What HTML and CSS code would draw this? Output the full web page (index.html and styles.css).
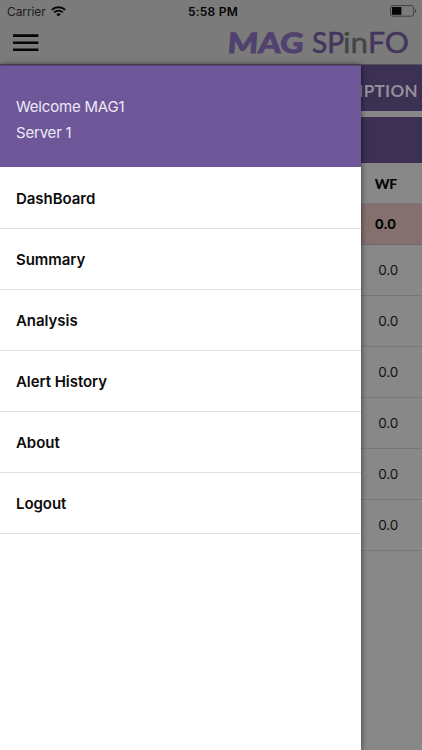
FILE: index.html
```html
<!DOCTYPE html>
<html lang="en">
<head>
<meta charset="utf-8">
<meta name="viewport" content="width=device-width, initial-scale=1">
<title>MAG SPinFO</title>
<link rel="stylesheet" href="styles.css">
</head>
<body>
<div class="app">
  <header class="header">
    <div class="status">
      <div class="carrier"><span>Carrier</span>
        <svg class="wifi" width="15" height="11" viewBox="0 0 15 11" fill="none" stroke="#050505"><path d="M.8 3.9a9.5 9.5 0 0 1 13.4 0" stroke-width="2"/><path d="M3.2 6.4a6.1 6.1 0 0 1 8.6 0" stroke-width="1.8"/><path d="M7.5 10.6 5.2 8.3a3.3 3.3 0 0 1 4.6 0z" fill="#050505" stroke="none"/></svg>
      </div>
      <span class="clock">5:58 PM</span>
      <svg class="battery" width="27" height="12" viewBox="0 0 27 12"><rect x=".6" y=".6" width="23" height="10.6" rx="2.2" fill="none" stroke="#3f3f3f"/><rect x="2" y="2" width="9.4" height="7.8" rx=".6" fill="#050505"/><path d="M25 4v4q1.3-.6 1.3-2T25 4z" fill="#3f3f3f"/></svg>
    </div>
    <div class="toolbar">
      <svg class="menu-icon" width="26" height="18" viewBox="0 0 26 18"><path d="M0 1.6h25.4M0 8.7h25.4M0 15.8h25.4" stroke="#050505" stroke-width="2.6"/></svg>
      <svg class="logo" width="186" height="42" viewBox="0 0 186 42">
        <text class="logo-mag" transform="translate(1 31.3) skewX(-4)" x="0" y="0" textLength="76" lengthAdjust="spacingAndGlyphs">MAG</text>
        <text class="logo-sp" x="86" y="31.3" textLength="32" lengthAdjust="spacingAndGlyphs">SP</text>
        <text class="logo-in" x="117" y="31.3" textLength="25" lengthAdjust="spacingAndGlyphs">in</text>
        <text class="logo-sp" x="142" y="31.3" textLength="41" lengthAdjust="spacingAndGlyphs">FO</text>
      </svg>
    </div>
  </header>
  <main class="content">
    <div class="tab">CONSUMPTION</div>
    <div class="band"></div>
    <div class="row head">WF</div>
    <div class="row total">0.0</div>
    <div class="row">0.0</div>
    <div class="row">0.0</div>
    <div class="row">0.0</div>
    <div class="row">0.0</div>
    <div class="row">0.0</div>
    <div class="row">0.0</div>
  </main>
  <aside class="drawer">
    <div class="welcome"><div>Welcome MAG1</div><div>Server 1</div></div>
    <nav class="nav">
      <a class="item">DashBoard</a>
      <a class="item">Summary</a>
      <a class="item">Analysis</a>
      <a class="item">Alert History</a>
      <a class="item">About</a>
      <a class="item">Logout</a>
    </nav>
  </aside>
</div>
</body>
</html>
```
FILE: styles.css
```css
* { box-sizing: border-box; }
body { margin: 0; font-family: Inter, "Liberation Sans", sans-serif; color: #050505; }
.app { position: relative; width: 422px; height: 750px; overflow: hidden; background: #888; }
.header { height: 65px; background: #7b7b7b; border-bottom: 1px solid #55505c; }
.status { display: grid; grid-template-columns: 1fr auto 1fr; align-items: center; height: 22px; padding: 0 5px 0 7px; font-size: 12px; }
.carrier { display: flex; align-items: center; gap: 5px; color: #1c1c1c; letter-spacing: -.1px; }
.clock { padding-left: 2px; font-weight: 600; letter-spacing: .25px; }
.battery { justify-self: end; }
.toolbar { display: flex; justify-content: space-between; align-items: flex-start; height: 42px; padding: 0 10px 0 13px; }
.menu-icon { margin-top: 12px; }
.logo { overflow: visible; }
.logo-mag, .logo-sp, .logo-in { font-family: Lato, sans-serif; font-size: 28px; }
.logo-mag { font-weight: 900; fill: #50416e; stroke: #50416e; stroke-width: .8px; }
.logo-sp { font-weight: 400; fill: #43365e; stroke: #43365e; stroke-width: .6px; }
.logo-in { fill: #454545; stroke: #454545; stroke-width: .4px; }
.tab { display: flex; align-items: center; justify-content: flex-end; height: 46px; padding: 4px 4px 0 0; background: #3c3053; color: #938f99; font: 700 17px Lato, sans-serif; letter-spacing: .35px; }
.band { height: 46px; margin-top: 6px; background: #3c3053; }
.row { display: flex; align-items: center; justify-content: flex-end; height: 51px; padding-right: 24px; border-bottom: 1px solid #77777a; font-size: 13.5px; color: #111; letter-spacing: -.2px; }
.row.head { height: 41px; padding: 1px 25px 0 0; font: 900 14px Lato, sans-serif; color: #050505; }
.row.total { height: 41px; padding-right: 26px; background: #84716f; border-color: #746767; font-size: 13.5px; font-weight: 700; color: #050505; letter-spacing: -.2px; }
.drawer { position: absolute; left: 0; top: 65px; bottom: 0; width: 361px; background: #fff; box-shadow: 0 0 6px rgba(0, 0, 0, .6); }
.welcome { height: 102px; padding: 28px 16px 0; background: #6d5799; color: #eee9f7; font-size: 15px; line-height: 26px; letter-spacing: -.2px; border-top: 1px solid #5a477f; }
.nav { padding-top: 1px; }
.item { display: flex; align-items: center; height: 61px; padding: 0 0 0 16px; border-bottom: 1px solid #e1e1e1; font-size: 15px; font-weight: 600; letter-spacing: -.05px; color: #0c0c0c; }
```
